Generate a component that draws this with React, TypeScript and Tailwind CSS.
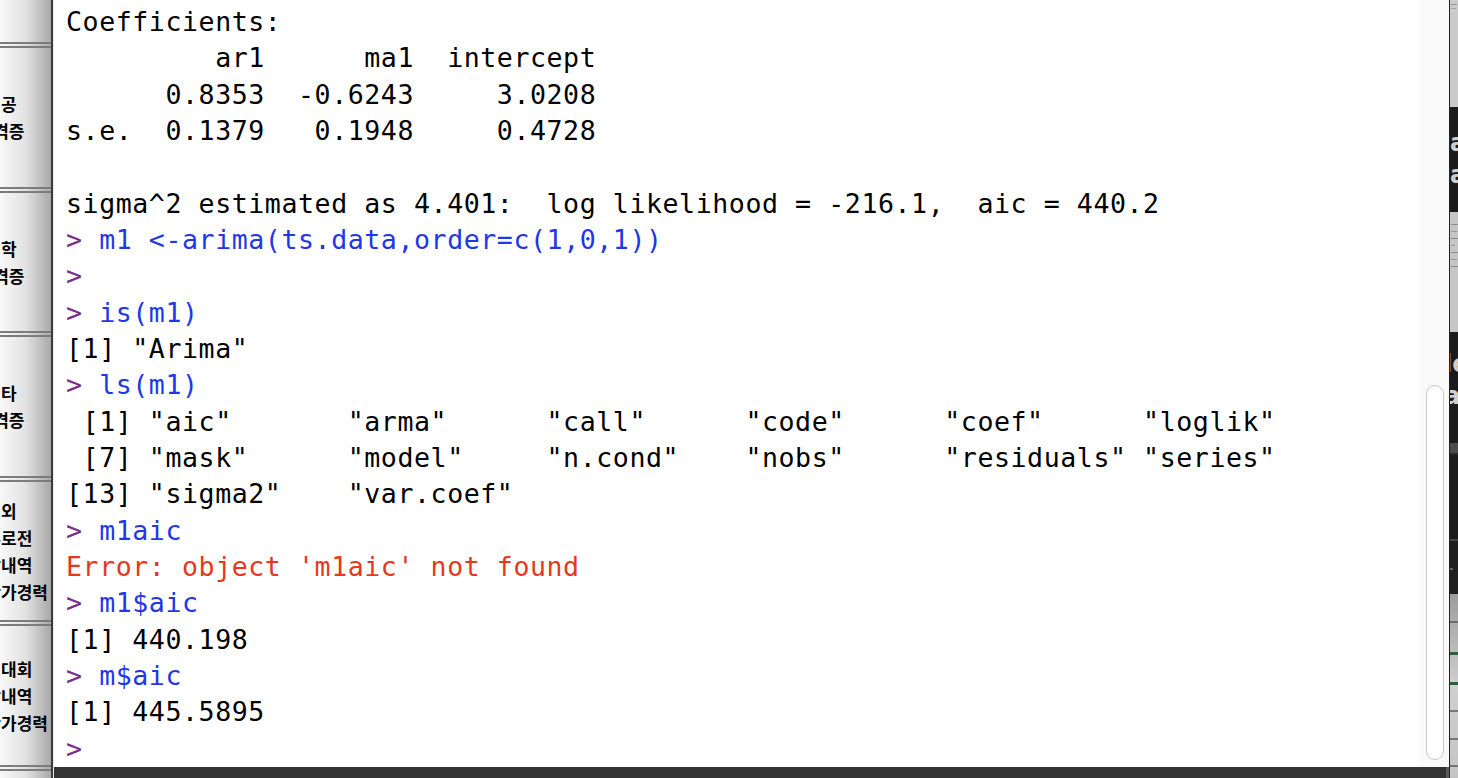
import React from 'react';

// R console output, one entry per line: [kind, text]
type Line = { kind: 'out' | 'in' | 'err' | 'prompt'; text: string };

const LINES: Line[] = [
  { kind: 'out', text: 'Coefficients:' },
  { kind: 'out', text: '         ar1      ma1  intercept' },
  { kind: 'out', text: '      0.8353  -0.6243     3.0208' },
  { kind: 'out', text: 's.e.  0.1379   0.1948     0.4728' },
  { kind: 'out', text: '' },
  { kind: 'out', text: 'sigma^2 estimated as 4.401:  log likelihood = -216.1,  aic = 440.2' },
  { kind: 'in', text: 'm1 <-arima(ts.data,order=c(1,0,1))' },
  { kind: 'prompt', text: '' },
  { kind: 'in', text: 'is(m1)' },
  { kind: 'out', text: '[1] "Arima"' },
  { kind: 'in', text: 'ls(m1)' },
  { kind: 'out', text: ' [1] "aic"       "arma"      "call"      "code"      "coef"      "loglik"' },
  { kind: 'out', text: ' [7] "mask"      "model"     "n.cond"    "nobs"      "residuals" "series"' },
  { kind: 'out', text: '[13] "sigma2"    "var.coef"' },
  { kind: 'in', text: 'm1aic' },
  { kind: 'err', text: "Error: object 'm1aic' not found" },
  { kind: 'in', text: 'm1$aic' },
  { kind: 'out', text: '[1] 440.198' },
  { kind: 'in', text: 'm$aic' },
  { kind: 'out', text: '[1] 445.5895' },
  { kind: 'prompt', text: '' },
];

const SIDE_BLOCKS: string[][] = [
  ['전공', '자격증'],
  ['어학', '자격증'],
  ['기타', '자격증'],
  ['해외', '교류로전', '수상내역', '대회참가경력'],
  ['국내대회', '수상내역', '대회참가경력'],
];

const Separator = () => (
  <div className="flex flex-col gap-[2px] shrink-0">
    <div className="h-[2px] bg-[#7c7c7c]" />
    <div className="h-[2px] bg-[#7c7c7c]" />
  </div>
);

const SideMenu = () => (
  <div className="w-[53px] shrink-0 h-full flex flex-col overflow-hidden bg-linear-to-r from-[#f8f8f8] via-[#e2e2e2] to-[#a9a9a9] border-r-2 border-[#3c3c3c]">
    <div className="h-[42px] shrink-0" />
    {SIDE_BLOCKS.map((block, i) => (
      <React.Fragment key={i}>
        <Separator />
        <div className="h-[138.5px] shrink-0 flex flex-col justify-center">
          <div className="w-[120px] ml-[-59px] text-center font-bold text-[17px] leading-[27px] text-black font-['Noto_Sans_CJK_KR',sans-serif] whitespace-nowrap">
            {block.map((t) => (
              <div key={t}>{t}</div>
            ))}
          </div>
        </div>
      </React.Fragment>
    ))}
    <Separator />
  </div>
);

const ConsoleLine = ({ line }: { line: Line }) => {
  if (line.kind === 'in' || line.kind === 'prompt') {
    return (
      <div className="h-[36.33px] whitespace-pre">
        <span className="text-[#7b2a8d]">&gt;</span>
        {line.text && <span className="text-[#1f37e6]"> {line.text}</span>}
      </div>
    );
  }
  return (
    <div className={`h-[36.33px] whitespace-pre ${line.kind === 'err' ? 'text-[#e5391d]' : 'text-black'}`}>
      {line.text}
    </div>
  );
};

const RightEdge = () => (
  <div className="w-[9px] shrink-0 h-full flex flex-col overflow-hidden border-l border-[#222] font-['DejaVu_Sans',sans-serif]">
    <div className="h-[107px] bg-[#cacaca] flex flex-col gap-[3px] pt-[4px] pl-[1px]">
      <div className="h-[1px] w-[6px] bg-[#9a9a9a]" />
      <div className="h-[1px] w-[5px] bg-[#a4a4a4]" />
    </div>
    <div className="h-[105px] bg-[#1b1b1b] text-[#d0d0d0] text-[24px] leading-[32px] pt-[20px] font-bold">
      <div>a</div>
      <div>a</div>
    </div>
    <div className="h-[120px] bg-[#c6c6c6] flex flex-col gap-[6px] pt-[12px] pl-[1px]">
      <div className="h-[1px] w-[7px] bg-[#8a8a8a]" />
      <div className="h-[1px] w-[6px] bg-[#999]" />
      <div className="h-[1px] w-[7px] bg-[#8a8a8a]" />
      <div className="h-[1px] w-[4px] bg-[#999]" />
      <div className="h-[1px] w-[7px] bg-[#8a8a8a]" />
      <div className="h-[1px] w-[6px] bg-[#999]" />
      <div className="h-[1px] w-[7px] bg-[#8a8a8a]" />
    </div>
    <div className="h-[111px] bg-[#1b1b1b] text-[#cfcfcf] text-[24px] leading-[32px] pt-[16px] font-bold ml-[-6px]">
      <div>le</div>
      <div>al</div>
    </div>
    <div className="h-[10px] bg-[#4c4c4c]" />
    <div className="h-[2px] bg-[#2c2c2c]" />
    <div className="h-[84px] bg-[#1c1c1c]" />
    <div className="h-[2px] bg-[#444]" />
    <div className="h-[53px] bg-[#1e1e1e] text-[#6a6a6a] text-[22px] leading-[53px] ml-[-4px]">-|</div>
    <div className="flex-1 bg-linear-to-b from-[#9c9c9c] via-[#cfcfcf] to-[#c4c4c4] flex flex-col">
      <div className="h-[27px]" />
      <div className="h-[2px] bg-[#6d6d6d]" />
      <div className="h-[29px]" />
      <div className="h-[3px] bg-[#2f5e3c]" />
      <div className="h-[27px]" />
      <div className="h-[3px] bg-[#2f5e3c]" />
      <div className="h-[25px]" />
      <div className="h-[2px] bg-[#777]" />
      <div className="h-[26px]" />
      <div className="h-[2px] bg-[#777]" />
      <div className="h-[25px]" />
      <div className="h-[2px] bg-[#777]" />
    </div>
  </div>
);

export default function App() {
  return (
    <div className="w-[1458px] h-[778px] flex overflow-hidden bg-white">
      <SideMenu />
      <div className="w-[1px] shrink-0 bg-[#e9e9e9]" />
      <div className="flex-1 flex flex-col min-w-0">
        <div className="flex-1 flex min-h-0">
          <div className="flex-1 bg-white pl-[12px] pt-[4px] overflow-hidden font-['DejaVu_Sans_Mono','Liberation_Mono',monospace] text-[26.6px] tracking-[0.56px] leading-[36.33px]">
            {LINES.map((line, i) => (
              <ConsoleLine key={i} line={line} />
            ))}
          </div>
          <div className="w-[30px] shrink-0 bg-[#fafafa] flex flex-col">
            <div className="h-[385px]" />
            <div className="ml-[7px] w-[18px] h-[375px] rounded-full border-[1.5px] border-[#c9c9c9] bg-white" />
          </div>
        </div>
        <div className="h-[11px] shrink-0 flex">
          <div className="flex-1 bg-[#333333]" />
          <div className="w-[3px] bg-[#5a5a5a]" />
        </div>
      </div>
      <RightEdge />
    </div>
  );
}
